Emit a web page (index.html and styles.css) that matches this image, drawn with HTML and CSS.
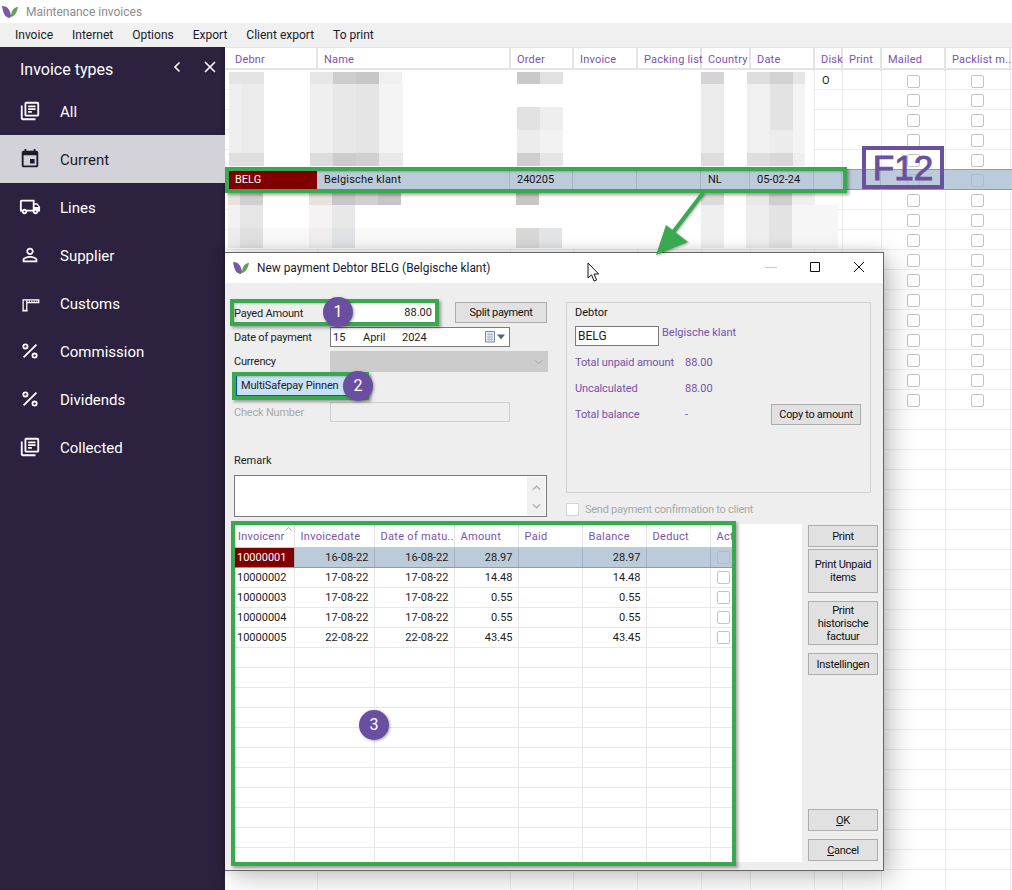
FILE: index.html
```html
<!DOCTYPE html>
<html lang="en">
<head>
<meta charset="utf-8">
<title>Maintenance invoices</title>
<link rel="stylesheet" href="styles.css">
</head>
<body>
<div class="app">
  <header class="titlebar">
    <svg class="leaf" viewBox="0 0 16 12"><path class="leaf-p" d="M0 0c5 0 8 3 9 10l-1 2C3 12 1 7 0 0z"/><path class="leaf-g" d="M16 1c-3 0-6 2-7 8l0 2c4-1 6-5 7-10z"/></svg>
    <span>Maintenance invoices</span>
  </header>
  <nav class="menubar"><span>Invoice</span><span>Internet</span><span>Options</span><span>Export</span><span>Client export</span><span>To print</span></nav>
  <div class="workspace">
    <aside class="sidebar">
      <div class="side-head">
        <span class="side-title">Invoice types</span>
        <svg class="side-ctl chev" viewBox="0 0 10 12"><path d="M7.500 1.500 3 6l4.500 4.500"/></svg>
        <svg class="side-ctl close" viewBox="0 0 12 12"><path d="M1 1l10 10M11 1 1 11"/></svg>
      </div>
      <a class="side-item"><svg class="ico" viewBox="0 0 24 24"><path d="M4 6H2v14c0 1.100.9 2 2 2h14v-2H4V6zm16-4H8c-1.100 0-2 .9-2 2v12c0 1.100.9 2 2 2h12c1.100 0 2-.9 2-2V4c0-1.100-.9-2-2-2zm0 14H8V4h12v12zM10 9h8v2h-8zm0 3h4v2h-4zm0-6h8v2h-8z"/></svg>All</a>
      <a class="side-item active"><svg class="ico" viewBox="0 0 24 24"><path d="M17 12h-5v5h5v-5zM16 1v2H8V1H6v2H5c-1.110 0-1.990.9-1.990 2L3 19c0 1.100.89 2 2 2h14c1.100 0 2-.9 2-2V5c0-1.100-.9-2-2-2h-1V1h-2zm3 18H5V8h14v11z"/></svg>Current</a>
      <a class="side-item"><svg class="ico" viewBox="0 0 24 24"><path d="M20 8h-3V4H3c-1.100 0-2 .9-2 2v11h2c0 1.660 1.340 3 3 3s3-1.340 3-3h6c0 1.660 1.340 3 3 3s3-1.340 3-3h2v-5l-3-4zm-.5 1.500 1.960 2.500H17V9.500h2.500zM6 18c-.55 0-1-.45-1-1s.45-1 1-1 1 .45 1 1-.45 1-1 1zm2.220-3c-.55-.61-1.330-1-2.220-1s-1.670.39-2.220 1H3V6h12v9H8.220zM18 18c-.55 0-1-.45-1-1s.45-1 1-1 1 .45 1 1-.45 1-1 1z"/></svg>Lines</a>
      <a class="side-item"><svg class="ico" viewBox="0 0 24 24"><path d="M12 5.900c1.160 0 2.100.94 2.100 2.100s-.94 2.100-2.100 2.100S9.900 9.160 9.900 8s.94-2.100 2.100-2.100m0 9c2.970 0 6.100 1.460 6.100 2.100v1.100H5.900V17c0-.64 3.130-2.100 6.100-2.100M12 4C9.790 4 8 5.790 8 8s1.790 4 4 4 4-1.790 4-4-1.790-4-4-4zm0 9c-2.670 0-8 1.340-8 4v3h16v-3c0-2.660-5.330-4-8-4z"/></svg>Supplier</a>
      <a class="side-item"><svg class="ico" viewBox="0 0 24 24"><path class="gate" d="M4.500 8.500h4v11.500h-4zM3.500 20.500h6M8.500 8.500H21.500v3H8.500"/><path class="gate-d" d="M10.500 10h10"/></svg>Customs</a>
      <a class="side-item"><svg class="ico" viewBox="0 0 24 24"><path class="pct" d="M19 5 5 19"/><circle class="pct" cx="7" cy="7" r="2.300"/><circle class="pct" cx="17" cy="17" r="2.300"/></svg>Commission</a>
      <a class="side-item"><svg class="ico" viewBox="0 0 24 24"><path class="pct" d="M19 5 5 19"/><circle class="pct" cx="7" cy="7" r="2.300"/><circle class="pct" cx="17" cy="17" r="2.300"/></svg>Dividends</a>
      <a class="side-item"><svg class="ico" viewBox="0 0 24 24"><path d="M4 6H2v14c0 1.100.9 2 2 2h14v-2H4V6zm16-4H8c-1.100 0-2 .9-2 2v12c0 1.100.9 2 2 2h12c1.100 0 2-.9 2-2V4c0-1.100-.9-2-2-2zm0 14H8V4h12v12zM10 9h8v2h-8zm0 3h4v2h-4zm0-6h8v2h-8z"/></svg>Collected</a>
    </aside>
    <section class="grid">
      <div class="ghead">
        <span>Debnr</span><span>Name</span><span>Order</span><span>Invoice</span><span>Packing list</span><span>Country</span><span>Date</span><span>Disk</span><span>Print</span><span>Mailed</span><span>Packlist m...</span>
      </div>
      <div class="gbody">
        <div class="grow"><span class="disk">O</span><i class="cb mail"></i><i class="cb pack"></i></div>
        <div class="grow"><i class="cb mail"></i><i class="cb pack"></i></div>
        <div class="grow"><i class="cb mail"></i><i class="cb pack"></i></div>
        <div class="grow"><i class="cb mail"></i><i class="cb pack"></i></div>
        <div class="grow"><i class="cb mail"></i><i class="cb pack"></i></div>
        <div class="grow selected">
          <span class="debnr">BELG</span><span class="cust">Belgische klant</span><span>240205</span><span></span><span></span><span>NL</span><span>05-02-24</span><span></span><span></span><i class="cb off"></i><i class="cb off"></i>
        </div>
        <div class="grow"><i class="cb mail"></i><i class="cb pack"></i></div>
        <div class="grow"><i class="cb mail"></i><i class="cb pack"></i></div>
        <div class="grow"><i class="cb mail"></i><i class="cb pack"></i></div>
        <div class="grow"><i class="cb mail"></i><i class="cb pack"></i></div>
        <div class="grow"><i class="cb mail"></i><i class="cb pack"></i></div>
        <div class="grow"><i class="cb mail"></i><i class="cb pack"></i></div>
        <div class="grow"><i class="cb mail"></i><i class="cb pack"></i></div>
        <div class="grow"><i class="cb mail"></i><i class="cb pack"></i></div>
        <div class="grow"><i class="cb mail"></i><i class="cb pack"></i></div>
        <div class="grow"><i class="cb mail"></i><i class="cb pack"></i></div>
        <div class="grow"><i class="cb mail"></i><i class="cb pack"></i></div>
        <div class="grow"></div><div class="grow"></div><div class="grow"></div><div class="grow"></div><div class="grow"></div><div class="grow"></div><div class="grow"></div><div class="grow"></div><div class="grow"></div><div class="grow"></div><div class="grow"></div><div class="grow"></div><div class="grow"></div><div class="grow"></div><div class="grow"></div><div class="grow"></div><div class="grow"></div><div class="grow"></div><div class="grow"></div><div class="grow"></div><div class="grow"></div><div class="grow"></div><div class="grow"></div>
      </div>
    </section>
  </div>

  <!-- censored rows of the list -->
  <svg class="mosaic" viewBox="0 0 1012 890" shape-rendering="crispEdges">
    <path fill="#fff" d="M229 70h584v97H229zM228 191h610v57H228z"/>
    <path fill="#e4e4e4" d="M229 72h12v12h-12zM241 72h23v12h-23z"/>
    <path fill="#efefef" d="M229 84h12v69h-12z"/><path fill="#ebebeb" d="M241 84h23v69h-23z"/>
    <path fill="#dfdfdf" d="M229 153h12v13h-12zM241 153h23v13h-23z"/>
    <path fill="#e6e6e6" d="M310 72h23v12h-23z"/><path fill="#cdcdcd" d="M333 72h23v12h-23z"/><path fill="#c8c6c7" d="M356 72h23v12h-23z"/><path fill="#f0f0f0" d="M379 72h23v12h-23z"/>
    <path fill="#efefef" d="M310 84h23v69h-23z"/><path fill="#e8e8e8" d="M333 84h23v69h-23z"/><path fill="#e5e5e5" d="M356 84h23v69h-23z"/><path fill="#f4f4f4" d="M379 84h24v69h-24z"/>
    <path fill="#dcdcdc" d="M310 153h23v13h-23z"/><path fill="#cccccc" d="M333 153h23v13h-23z"/><path fill="#d0d0d0" d="M356 153h23v13h-23z"/><path fill="#e8e8e8" d="M379 153h24v13h-24z"/>
    <path fill="#c9c8ca" d="M517 72h23v12h-23z"/><path fill="#e1e1e1" d="M540 72h23v12h-23z"/>
    <path fill="#e1e1e1" d="M517 107h23v23h-23z"/><path fill="#eeeeee" d="M540 107h23v23h-23z"/>
    <path fill="#ececec" d="M517 130h23v23h-23z"/><path fill="#f2f2f2" d="M540 130h23v23h-23z"/>
    <path fill="#cfcfd0" d="M517 153h23v13h-23z"/><path fill="#e5e5e5" d="M540 153h23v13h-23z"/>
    <path fill="#d5d3d5" d="M701 72h23v12h-23z"/><path fill="#ececec" d="M701 84h23v69h-23z"/><path fill="#dedcde" d="M701 153h23v13h-23z"/>
    <path fill="#dedede" d="M747 72h23v12h-23z"/><path fill="#d2d2d2" d="M770 72h23v12h-23z"/><path fill="#e6e6e6" d="M793 72h12v12h-12z"/>
    <path fill="#f0f0f0" d="M747 84h23v69h-23z"/><path fill="#e3e3e3" d="M770 84h23v46h-23z"/><path fill="#ececec" d="M770 130h23v23h-23z"/><path fill="#f4f4f4" d="M793 84h12v69h-12z"/>
    <path fill="#dedede" d="M747 153h23v13h-23z"/><path fill="#d8d8d8" d="M770 153h23v13h-23z"/><path fill="#eeeeee" d="M793 153h12v13h-12z"/>
    <path fill="#e6e3df" d="M228 192h12v13h-12zM309 192h23v13h-23z"/><path fill="#d0cfd2" d="M240 192h23v13h-23z"/><path fill="#c8c6c8" d="M332 192h23v13h-23z"/><path fill="#d2d0d0" d="M355 192h23v13h-23z"/><path fill="#c6c4c6" d="M378 192h23v13h-23z"/><path fill="#c8c6c7" d="M516 192h23v13h-23z"/>
    <path fill="#f3f1f1" d="M228 205h12v23h-12z"/><path fill="#e6e6e6" d="M240 205h23v23h-23z"/><path fill="#f5f3f3" d="M309 205h23v23h-23z"/><path fill="#e8e8e8" d="M332 205h23v23h-23z"/>
    <path fill="#f9f9f9" d="M263 228h46v20h-46zM355 228h161v20H355z"/><path fill="#ececec" d="M228 228h12v20h-12z"/><path fill="#e0e0e0" d="M240 228h23v20h-23z"/><path fill="#efeded" d="M309 228h23v20h-23z"/><path fill="#e0e2e5" d="M332 228h23v20h-23z"/><path fill="#d8d8d6" d="M516 228h23v20h-23z"/><path fill="#e3e4e6" d="M539 228h23v20h-23z"/>
    <path fill="#dcdcdc" d="M701 192h23v13h-23z"/><path fill="#efefef" d="M701 205h23v43h-23z"/>
    <path fill="#e8e8e8" d="M746 192h23v13h-23z"/><path fill="#cfcfcf" d="M769 192h23v13h-23z"/><path fill="#efefef" d="M792 192h23v13h-23z"/>
    <path fill="#eeeeee" d="M746 205h23v43h-23z"/><path fill="#e3e3e3" d="M769 205h23v43h-23z"/><path fill="#f6f6f6" d="M792 205h46v43h-46z"/>
  </svg>

  <div class="dialog">
    <div class="dlg-title">
      <svg class="leaf" viewBox="0 0 16 12"><path class="leaf-p" d="M0 0c5 0 8 3 9 10l-1 2C3 12 1 7 0 0z"/><path class="leaf-g" d="M16 1c-3 0-6 2-7 8l0 2c4-1 6-5 7-10z"/></svg>
      <span class="dlg-name">New payment Debtor BELG (Belgische klant)</span>
      <div class="winbtns">
        <svg class="winbtn" viewBox="0 0 12 12"><path class="min" d="M0 6.500h12"/></svg>
        <svg class="winbtn" viewBox="0 0 12 12"><path d="M1.500 1.500h9v9h-9z"/></svg>
        <svg class="winbtn" viewBox="0 0 12 12"><path d="M1 1l10 10M11 1 1 11"/></svg>
      </div>
    </div>
    <div class="dlg-top">
      <div class="form">
        <div class="frow r-pay">
          <label>Payed Amount</label>
          <div class="amount">88.00</div>
          <button class="btn split">Split payment</button>
        </div>
        <div class="frow r-date">
          <label>Date of payment</label>
          <div class="date">
            <span class="d1">15</span><span class="d2">April</span><span class="d3">2024</span>
            <svg class="calendar" viewBox="0 0 21 12"><path class="cal-b" d="M1.500 .5h9v10.500h-9z"/><path class="cal-l" d="M3 3.500h6M3 6h6M3 8.500h6M5 2v8M7.500 2v8"/><path class="cal-a" d="M13 3.500h8l-4 5z"/></svg>
          </div>
        </div>
        <div class="frow r-cur">
          <label>Currency</label>
          <div class="select"><svg viewBox="0 0 10 6"><path d="M1 1l4 4 4-4"/></svg></div>
        </div>
        <div class="method"><span>MultiSafepay Pinnen</span></div>
        <div class="frow r-check">
          <label class="off">Check Number</label>
          <div class="check"></div>
        </div>
        <div class="remark-label">Remark</div>
        <div class="remark">
          <div class="scroll">
            <svg viewBox="0 0 10 6"><path d="M1 5l4-4 4 4"/></svg>
            <svg viewBox="0 0 10 6"><path d="M1 1l4 4 4-4"/></svg>
          </div>
        </div>
      </div>
      <div class="debtor-col">
        <fieldset class="debtor">
          <div class="d-title">Debtor</div>
          <div class="d-id"><div class="d-input">BELG</div><span class="purple d-name">Belgische klant</span></div>
          <div class="d-line first"><span class="purple d-label">Total unpaid amount</span><span class="purple">88.00</span></div>
          <div class="d-line"><span class="purple d-label">Uncalculated</span><span class="purple">88.00</span></div>
          <div class="d-line last"><span class="purple d-label">Total balance</span><span class="purple">-</span><button class="btn copy">Copy to amount</button></div>
        </fieldset>
        <div class="send"><i class="send-box"></i><span>Send payment confirmation to client</span></div>
      </div>
    </div>
    <div class="dlg-bottom">
      <div class="items">
        <table>
          <colgroup><col class="c1"><col class="c2"><col class="c2"><col class="c3"><col class="c3"><col class="c3"><col class="c3"><col class="c4"></colgroup>
          <thead><tr><th class="sorted">Invoicenr<svg class="caret" viewBox="0 0 7 4"><path d="M.5 3.500 3.500 .5l3 3"/></svg></th><th>Invoicedate</th><th>Date of matu...</th><th>Amount</th><th>Paid</th><th>Balance</th><th>Deduct</th><th>Act</th></tr></thead>
          <tbody>
            <tr class="sel"><td class="no">10000001</td><td>16-08-22</td><td>16-08-22</td><td>28.97</td><td></td><td>28.97</td><td></td><td class="act"><i class="cb off"></i></td></tr>
            <tr><td class="no">10000002</td><td>17-08-22</td><td>17-08-22</td><td>14.48</td><td></td><td>14.48</td><td></td><td class="act"><i class="cb"></i></td></tr>
            <tr><td class="no">10000003</td><td>17-08-22</td><td>17-08-22</td><td>0.55</td><td></td><td>0.55</td><td></td><td class="act"><i class="cb"></i></td></tr>
            <tr><td class="no">10000004</td><td>17-08-22</td><td>17-08-22</td><td>0.55</td><td></td><td>0.55</td><td></td><td class="act"><i class="cb"></i></td></tr>
            <tr><td class="no">10000005</td><td>22-08-22</td><td>22-08-22</td><td>43.45</td><td></td><td>43.45</td><td></td><td class="act"><i class="cb"></i></td></tr>
            <tr><td></td><td></td><td></td><td></td><td></td><td></td><td></td><td></td></tr>
            <tr><td></td><td></td><td></td><td></td><td></td><td></td><td></td><td></td></tr>
            <tr><td></td><td></td><td></td><td></td><td></td><td></td><td></td><td></td></tr>
            <tr><td></td><td></td><td></td><td></td><td></td><td></td><td></td><td></td></tr>
            <tr><td></td><td></td><td></td><td></td><td></td><td></td><td></td><td></td></tr>
            <tr><td></td><td></td><td></td><td></td><td></td><td></td><td></td><td></td></tr>
            <tr><td></td><td></td><td></td><td></td><td></td><td></td><td></td><td></td></tr>
            <tr><td></td><td></td><td></td><td></td><td></td><td></td><td></td><td></td></tr>
            <tr><td></td><td></td><td></td><td></td><td></td><td></td><td></td><td></td></tr>
            <tr><td></td><td></td><td></td><td></td><td></td><td></td><td></td><td></td></tr>
            <tr><td></td><td></td><td></td><td></td><td></td><td></td><td></td><td></td></tr>
            <tr><td></td><td></td><td></td><td></td><td></td><td></td><td></td><td></td></tr>
          </tbody>
        </table>
      </div>
      <div class="side-btns">
        <button class="btn b22">Print</button>
        <button class="btn b44">Print Unpaid items</button>
        <button class="btn b44 gap8">Print historische factuur</button>
        <button class="btn b22 gap8">Instellingen</button>
        <button class="btn b22 push"><u>O</u>K</button>
        <button class="btn b22 gap8"><u>C</u>ancel</button>
      </div>
    </div>
  </div>

  <!-- annotations on top of the screenshot -->
  <div class="mark m-row"></div>
  <div class="mark m-pay"></div>
  <div class="mark m-method"></div>
  <div class="mark m-table"></div>
  <svg class="arrow" viewBox="0 0 70 70"><path class="arrow-l" d="M50 1 18 43"/><path class="arrow-h" d="M3 63l10-30 22 17z"/></svg>
  <div class="f12">F12</div>
  <div class="num n1">1</div>
  <div class="num n2">2</div>
  <div class="num n3">3</div>
  <svg class="cursor" viewBox="0 0 14 21"><path d="M1 1v15l3.500-3.200 2.600 6.200 2.500-1-2.600-6h4.700z"/></svg>
</div>
</body>
</html>
```
FILE: styles.css
```css
* { box-sizing: border-box; }
html, body { margin: 0; height: 100%; }
body { font-family: Roboto, "Liberation Sans", sans-serif; font-size: 12px; color: #1c1c1c; background: #fff; overflow: hidden; }
.app { position: relative; width: 1012px; height: 890px; overflow: hidden; display: flex; flex-direction: column; }

.leaf { width: 16px; height: 12px; flex: none; }
.leaf-p { fill: #7a5aa6; }
.leaf-g { fill: #5fa452; }

.titlebar { height: 23px; display: flex; align-items: center; padding-left: 2px; gap: 8px; color: #8b8b8b; background: #fff; }
.menubar { height: 24px; background: #f0f0f0; display: flex; align-items: center; padding-left: 15px; gap: 19px; color: #1b1b2a; }

.workspace { flex: 1; display: flex; min-height: 0; }
.sidebar { width: 225px; flex: none; background: #2c2240; color: #fff; font-size: 15px; box-shadow: inset -6px 0 6px -6px rgba(0,0,0,.3); }
.side-head { height: 40px; display: flex; align-items: center; padding-left: 20px; padding-top: 4px; }
.side-title { font-size: 16px; width: 152px; }
.side-ctl { fill: none; stroke: #fff; stroke-width: 1.6; }
.chev { width: 10px; height: 12px; margin-right: 22px; margin-top: -4px; }
.close { width: 12px; height: 12px; margin-top: -4px; }
.side-item { height: 48px; display: flex; align-items: center; padding: 2px 0 0 19px; gap: 19px; }
.side-item.active { background: #d4d2d9; color: #1b1b2a; }
.ico { width: 22px; height: 22px; margin-top: -2px; fill: currentColor; flex: none; }
.gate { fill: none; stroke: currentColor; stroke-width: 1.4; }
.gate-d { fill: none; stroke: currentColor; stroke-width: 1.500; stroke-dasharray: 1.500 1.200; }
.pct { fill: none; stroke: currentColor; stroke-width: 2; }

.grid { flex: 1; min-width: 0; }
.ghead, .grow { display: grid; grid-template-columns: 92px 193px 63px 64px 64px 49px 64px 28px 39px 64px 65px 2px; }
.ghead { height: 23px; border-top: 1px solid #e4e4e4; border-bottom: 2px solid #e4e4e4; color: #7c52ad; font-size: 11px; line-height: 23px; letter-spacing: .2px; }
.ghead span { padding-left: 7px; margin-right: -1px; border-right: 2px solid #e4e4e4; white-space: nowrap; }
.ghead span:first-child { padding-left: 10px; }
.gbody { height: 821px; overflow: hidden; background-image:
  linear-gradient(#ececec,#ececec), linear-gradient(#ececec,#ececec), linear-gradient(#ececec,#ececec), linear-gradient(#ececec,#ececec), linear-gradient(#ececec,#ececec), linear-gradient(#ececec,#ececec),
  linear-gradient(#ececec,#ececec), linear-gradient(#ececec,#ececec), linear-gradient(#ececec,#ececec), linear-gradient(#ececec,#ececec), linear-gradient(#ececec,#ececec);
  background-repeat: no-repeat; background-size: 1px 100%;
  background-position: 92px 0, 285px 0, 348px 0, 412px 0, 476px 0, 525px 0, 589px 0, 617px 0, 656px 0, 720px 0, 785px 0; }
.grow { height: 20px; border-bottom: 1px solid #ececec; line-height: 21px; font-size: 11px; }
.grow.selected { background: #bccbd9; border-top: 1px solid #8d9cad; border-bottom: 1px solid #8d9cad; height: 21px; margin-top: -1px; line-height: 20px; color: #141414; }
.selected span { padding-left: 7px; border-right: 1px solid #a6b4c3; }
.selected .cust { letter-spacing: .2px; }
.selected .debnr { margin-left: 4px; padding-left: 6px; background: #800000; color: #fff; border: 0; }
.disk { grid-column: 8; padding-left: 8px; font-size: 11px; }
.cb { display: block; width: 13px; height: 13px; margin-top: 1px; border: 1px solid #c4c4c4; border-radius: 2px; background: #fff; align-self: center; justify-self: center; }
.cb.off { background: transparent; border-color: #aebccb; margin-top: 0; }
.cb.mail { grid-column: 10; }
.cb.pack { grid-column: 11; }
.selected .cb { grid-column: auto; }

.mosaic { position: absolute; inset: 0; width: 1012px; height: 890px; pointer-events: none; }

.dialog { position: absolute; left: 225px; top: 252px; width: 659px; height: 619px; background: #eeeeee; border: 1px solid #666; border-left: 0; box-shadow: 8px 8px 24px rgba(0,0,0,.22), 0 -2px 10px rgba(0,0,0,.12); display: flex; flex-direction: column; font-size: 11px; }
.dlg-title { height: 30px; flex: none; background: #fff; display: flex; align-items: center; padding-left: 8px; color: #1c1c2c; }
.dlg-name { margin-left: 8px; font-size: 11.900px; }
.winbtns { margin-left: auto; display: flex; gap: 32px; padding-right: 18px; margin-top: -2px; }
.winbtn { width: 12px; height: 12px; fill: none; stroke: #111; stroke-width: 1; }
.winbtn .min { stroke: #c8c8c8; }

.dlg-top { height: 241px; flex: none; display: flex; padding-left: 9px; }
.form { width: 314px; padding-top: 19px; }
.frow { display: flex; align-items: center; }
.frow label { width: 96px; flex: none; letter-spacing: -.2px; }
.frow label.off { color: #a9a9a9; }
.r-pay { height: 21px; }
.r-pay label { padding-top: 2px; }
.amount { width: 105px; height: 21px; background: #fff; text-align: right; padding-right: 3px; line-height: 22px; }
.btn { font: inherit; color: #111; background: #e1e1e1; border: 1px solid #adadad; padding: 0; letter-spacing: -.3px; }
.split { width: 92px; height: 21px; margin-left: 20px; }
.r-date { height: 20px; margin-top: 4px; }
.date { width: 180px; height: 20px; border: 1px solid #7a7a7a; background: #fff; display: flex; align-items: center; position: relative; padding-left: 2px; }
.d1 { width: 30px; } .d2 { width: 39px; }
.calendar { width: 21px; height: 12px; margin-left: auto; margin-right: 4px; }
.cal-b { fill: #e9edf2; stroke: #7f8996; }
.cal-l { stroke: #a9b2bc; stroke-width: .8; fill: none; }
.cal-a { fill: #50648a; }
.r-cur { height: 21px; margin-top: 4px; }
.select { width: 218px; height: 21px; background: #cccccc; display: flex; align-items: center; justify-content: flex-end; padding-right: 5px; }
.select svg { width: 9px; height: 6px; fill: none; stroke: #a0a0a0; }
.method { margin: 4px 0 0 2px; width: 130px; height: 20px; background: #c8e1f6; border-bottom: 1px solid #0a5ea8; border-left: 1px solid #0a5ea8; padding-left: 4px; line-height: 19px; letter-spacing: -.15px; }
.r-check { height: 20px; margin-top: 6px; }
.check { width: 180px; height: 20px; border: 1px solid #cfcfcf; }
.remark-label { height: 16px; margin-top: 31px; line-height: 16px; }
.remark { width: 313px; height: 42px; margin-top: 6px; background: #fff; border: 1px solid #7a7a7a; display: flex; justify-content: flex-end; }
.scroll { width: 18px; margin: 1px; background: #f0f0f0; display: flex; flex-direction: column; justify-content: space-between; align-items: center; padding: 8px 0 6px; }
.scroll svg { width: 9px; height: 6px; fill: none; stroke: #b0b0b0; stroke-width: 1.500; }

.debtor-col { margin-left: 18px; padding-top: 19px; width: 305px; }
.debtor { margin: 0; padding: 0 8px; width: 305px; height: 191px; border: 1px solid #d2d2d2; }
.d-title { height: 23px; line-height: 20px; color: #111; }
.d-id { display: flex; height: 20px; }
.d-input { width: 84px; height: 20px; background: #fff; border: 1px solid #7a7a7a; padding-left: 2px; line-height: 19px; font-size: 12px; }
.purple { color: #7651a8; }
.d-name { margin-left: 3px; line-height: 14px; }
.d-line { display: flex; align-items: center; height: 26px; }
.d-line.first { margin-top: 3px; }
.d-label { width: 110px; flex: none; letter-spacing: -.1px; }
.copy { width: 90px; height: 21px; margin-left: auto; margin-right: 1px; }
.send { margin-top: 9px; display: flex; align-items: center; gap: 6px; color: #a9a9a9; height: 14px; letter-spacing: -.25px; }
.send-box { width: 13px; height: 13px; background: #fff; border: 1px solid #d4d4d4; }

.dlg-bottom { flex: 1; display: flex; padding-left: 10px; }
.items { width: 567px; height: 338px; background: #fff; overflow: hidden; }
.items table { width: 497px; border-collapse: collapse; table-layout: fixed; }
.c1 { width: 59px; } .c2 { width: 80px; } .c3 { width: 64px; } .c4 { width: 22px; }
.items th { height: 23px; font-weight: 400; color: #7c52ad; font-size: 11px; text-align: left; padding: 2px 0 0 6px; border-right: 1px solid #e4e4e4; border-bottom: 1px solid #c8ccd2; white-space: nowrap; overflow: hidden; letter-spacing: .3px; position: relative; }
.items th.sorted { padding-left: 3px; letter-spacing: .2px; }
.caret { position: absolute; right: 2px; top: 3px; width: 7px; height: 4px; fill: none; stroke: #999; stroke-width: .8; }
.items td { height: 20px; padding: 0 5px 0 0; text-align: right; border-right: 1px solid #e8e8e8; border-bottom: 1px solid #e8e8e8; }
.items td.no { text-align: left; padding-left: 2px; }
.items td.act { padding: 0 0 0 5px; }
.sel td { background: #bccbd9; border-right-color: #a6b4c3; border-bottom-color: #8d9cad; }
.sel td.no { background: #800000; color: #fff; }

.side-btns { width: 70px; margin-left: 6px; padding-top: 1px; display: flex; flex-direction: column; height: 337px; }
.b22 { height: 22px; flex: none; }
.b44 { height: 44px; flex: none; margin-top: 2px; line-height: 13px; padding: 0 2px; }
.btn.gap8 { margin-top: 8px; }
.btn.push { margin-top: auto; }

.mark { position: absolute; border: 4px solid #3aa84e; box-shadow: 2px 2px 3px rgba(0,0,0,.35), inset 1px 1px 2px rgba(0,0,0,.2); pointer-events: none; }
.m-row { left: 225px; top: 167px; width: 622px; height: 26px; }
.m-pay { left: 230px; top: 299px; width: 209px; height: 27px; }
.m-method { left: 232px; top: 372px; width: 137px; height: 28px; }
.m-table { left: 231px; top: 521px; width: 505px; height: 345px; }
.arrow { position: absolute; left: 653px; top: 192px; width: 70px; height: 70px; overflow: visible; filter: drop-shadow(1px 1px 1px rgba(0,0,0,.3)); }
.arrow-l { stroke: #3aa84e; stroke-width: 4; fill: none; }
.arrow-h { fill: #3aa84e; }
.f12 { position: absolute; left: 862px; top: 146px; width: 82px; height: 43px; border: 4px solid #6a509f; color: #6a509f; font: 400 35px/35px "Liberation Sans", sans-serif; -webkit-text-stroke: 1px #6a509f; text-align: center; }
.num { position: absolute; width: 30px; height: 30px; border-radius: 50%; background: #6a4fa0; color: #fff; font-size: 16px; line-height: 30px; text-align: center; box-shadow: 1px 1px 3px rgba(0,0,0,.35); }
.n1 { left: 323px; top: 297px; }
.n2 { left: 343px; top: 371px; }
.n3 { left: 359px; top: 710px; }
.cursor { position: absolute; left: 587px; top: 262px; width: 14px; height: 21px; fill: #fff; stroke: #111; stroke-width: 1; }
```
